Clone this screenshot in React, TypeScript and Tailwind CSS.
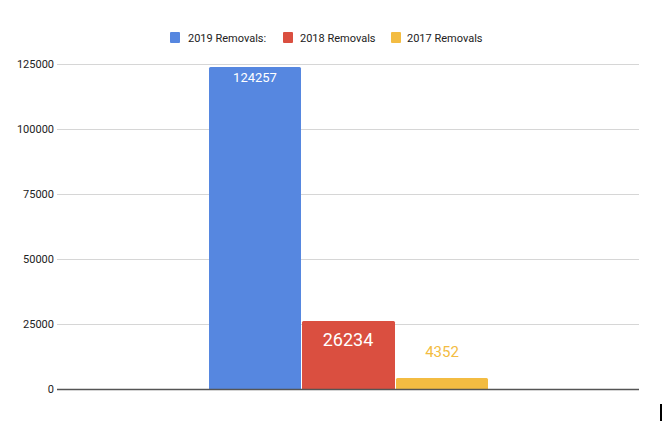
export default function App() {
  const f = '"Roboto","Liberation Sans",Arial,sans-serif';
  const grid = [
    { y: 64, l: "125000" },
    { y: 129, l: "100000" },
    { y: 194, l: "75000" },
    { y: 259, l: "50000" },
    { y: 324, l: "25000" },
  ];
  return (
    <div className="w-[662px] h-[428px] bg-white relative overflow-hidden">
      <svg width="662" height="428" className="block">
        <g fontFamily={f} fontSize="11" fill="#222">
          <rect x="170" y="32" width="10" height="11" rx="1" fill="#5687e0" />
          <text x="188" y="42">2019 Removals:</text>
          <rect x="283" y="32" width="10" height="11" rx="1" fill="#da4f40" />
          <text x="300" y="42">2018 Removals</text>
          <rect x="391" y="32" width="10" height="11" rx="1" fill="#f3bc42" />
          <text x="407" y="42">2017 Removals</text>
        </g>
        {grid.map((g) => (
          <g key={g.l}>
            <line x1="57" x2="639" y1={g.y + 0.5} y2={g.y + 0.5} stroke="#d6d6d6" />
            <text x="54" y={g.y + 4} textAnchor="end" fontFamily={f} fontSize="11" fill="#222">{g.l}</text>
          </g>
        ))}
        <rect x="209" y="67" width="92" height="323" rx="1.5" fill="#5687e0" />
        <rect x="302" y="321" width="93" height="69" rx="1.5" fill="#da4f40" />
        <rect x="396" y="378" width="92" height="12" rx="1.5" fill="#f3bc42" />
        <line x1="57" x2="639" y1="389.5" y2="389.5" stroke="#555" strokeWidth="1.3" />
        <text x="54" y="393" textAnchor="end" fontFamily={f} fontSize="11" fill="#222">0</text>
        <text x="255" y="82" textAnchor="middle" fontFamily={f} fontSize="13" fill="#fff">124257</text>
        <text x="348" y="346" textAnchor="middle" fontFamily={f} fontSize="18" fill="#fff">26234</text>
        <text x="442" y="357" textAnchor="middle" fontFamily={f} fontSize="15" fill="#f3bc42">4352</text>
        <rect x="660" y="404" width="2" height="17" fill="#000" />
      </svg>
    </div>
  );
}
